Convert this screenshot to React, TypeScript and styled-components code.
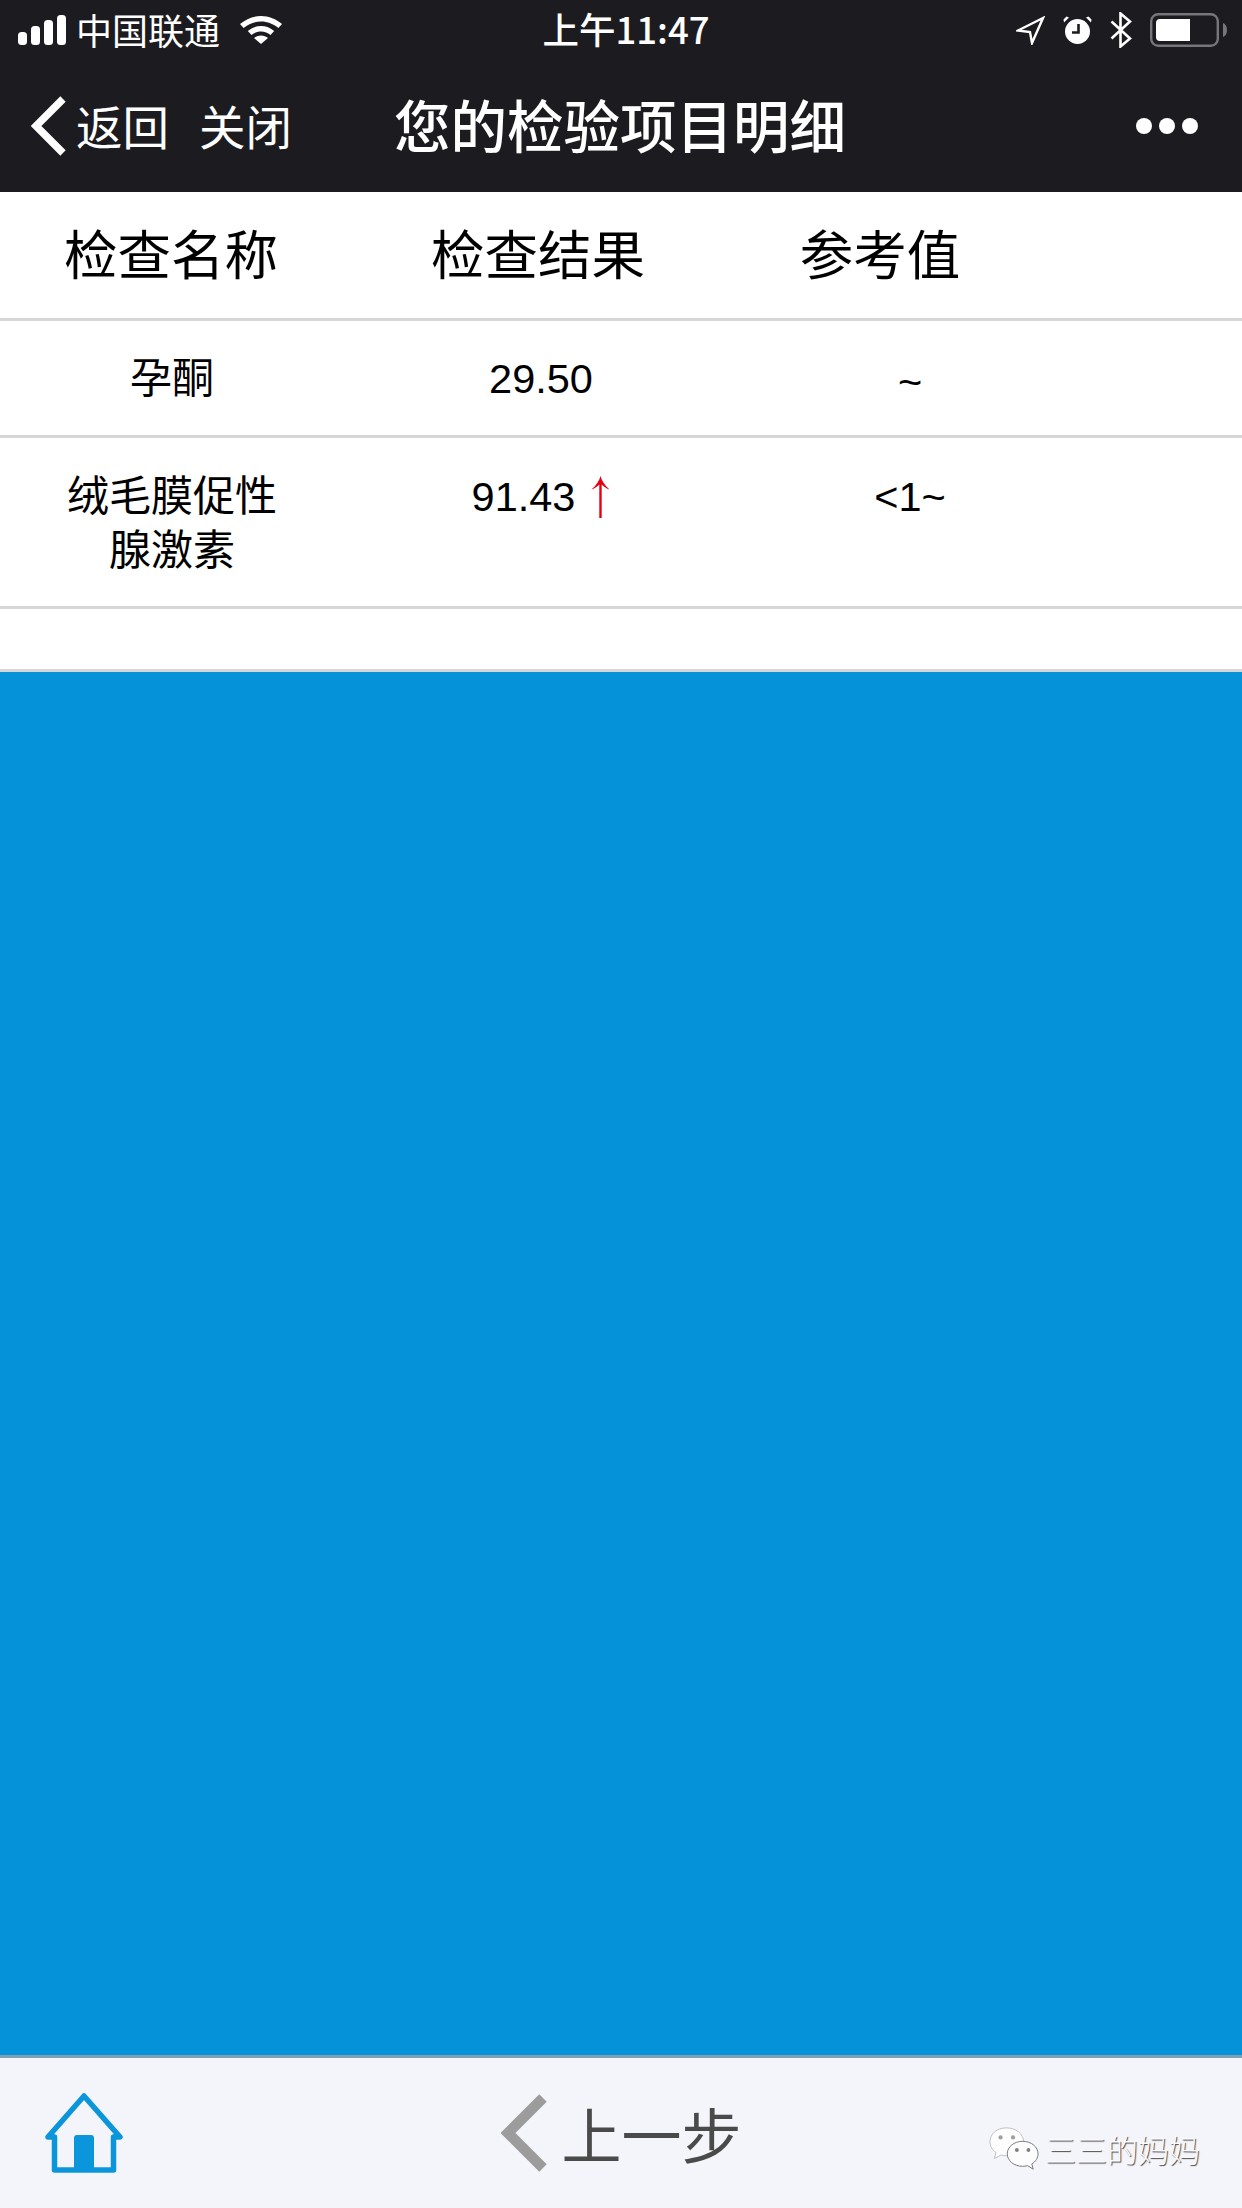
import React from "react";
import styled, { createGlobalStyle } from "styled-components";

const CJK = `"Noto Sans CJK SC", "Noto Sans", sans-serif`;
const MIXED = `"Liberation Sans", "Noto Sans CJK SC", sans-serif`;

const Global = createGlobalStyle`
  html, body { margin: 0; padding: 0; background: #0592d8; }
  * { box-sizing: border-box; }
`;

const Page = styled.div`
  width: 1242px;
  height: 2208px;
  display: flex;
  flex-direction: column;
  overflow: hidden;
  font-family: ${MIXED};
`;

const Header = styled.header`
  background: #1c1c20;
  color: #fff;
  height: 192px;
  font-family: ${CJK};
`;

const StatusBar = styled.div`
  height: 60px;
  display: grid;
  grid-template-columns: 1fr auto 1fr;
  align-items: center;
  padding: 0 15px 0 18px;
`;

const StatusLeft = styled.div`
  display: flex;
  align-items: center;
`;

const Carrier = styled.span`
  font-size: 36px;
  line-height: 58px;
  height: 60px;
  margin: 0 20px 0 10px;
  font-weight: 400;
`;

const Time = styled.span`
  font-size: 36.5px;
  line-height: 58px;
  height: 60px;
  font-weight: 500;
  margin-left: 7px;
`;

const StatusRight = styled.div`
  display: flex;
  justify-content: flex-end;
  align-items: center;
  gap: 18px;
`;

const NavBar = styled.nav`
  height: 132px;
  display: grid;
  grid-template-columns: 1fr auto 1fr;
  align-items: center;
  padding: 0 44px 0 31px;
`;

const NavLeft = styled.div`
  display: flex;
  align-items: center;
`;

const NavLink = styled.span<{ $gap: number }>`
  font-size: 46.5px;
  font-weight: 400;
  line-height: 58px;
  height: 60px;
  margin-left: ${(p) => p.$gap}px;
`;

const Title = styled.h1`
  margin: 0 0 6px 11px;
  font-size: 56.5px;
  line-height: 70px;
  font-weight: 500;
`;

const Dots = styled.div`
  display: flex;
  justify-content: flex-end;
  gap: 7px;
`;

const Dot = styled.i`
  width: 16px;
  height: 16px;
  border-radius: 50%;
  background: #fff;
`;

const Table = styled.section`
  background: #fff;
  color: #000;
`;

const Row = styled.div<{ $columns: string; $height: number; $top?: number }>`
  display: grid;
  grid-template-columns: ${(p) => p.$columns};
  height: ${(p) => p.$height}px;
  padding-top: ${(p) => p.$top ?? 0}px;
  border-bottom: 3px solid #d6d6d6;
  text-align: center;
`;

const HeadCell = styled.div`
  font-size: 53.5px;
  line-height: 120px;
  font-family: ${CJK};
  font-weight: 400;
`;

const Cell = styled.div<{ $shift?: number }>`
  font-size: 41.5px;
  line-height: 54px;
  padding-top: ${(p) => p.$shift ?? 0}px;
  font-weight: 400;
  font-family: ${MIXED};
`;

const NameCell = styled.div<{ $lift: number }>`
  font-size: 42px;
  line-height: 54px;
  margin-top: ${(p) => -p.$lift}px;
  font-weight: 400;
  font-family: ${CJK};
`;

const ResultCell = styled(Cell)`
  display: flex;
  justify-content: center;
  align-items: flex-start;
`;

const Arrow = styled.svg`
  margin: 6px 0 0 16px;
`;

const Blue = styled.main`
  flex: 1;
  background: #0592d8;
  border-bottom: 3px solid #7f9fb3;
`;

const Footer = styled.footer`
  height: 150px;
  background: #f4f5fa;
  display: grid;
  grid-template-columns: 1fr auto 1fr;
  align-items: center;
  padding: 0 42px 0 44px;
`;

const Prev = styled.div`
  display: flex;
  align-items: center;
  gap: 15px;
  margin-left: -2px;
  color: #4a4a4a;
  font-family: ${CJK};
  font-size: 60px;
  font-weight: 400;
  line-height: 80px;
`;

const Watermark = styled.div`
  justify-self: end;
  align-self: end;
  display: flex;
  align-items: center;
  gap: 6px;
  padding-bottom: 36px;
  font-family: ${CJK};
  font-size: 31px;
  line-height: 44px;
  font-weight: 300;
  color: #fbfbfd;
  text-shadow: 1px 1px 1px rgba(40, 40, 40, 0.85);
`;

const HEAD_COLUMNS = "342px 392px 292px 216px";
const BODY_COLUMNS = "344px 394px 344px 160px";

const Signal = () => (
  <svg width="48" height="30" viewBox="0 0 48 30" fill="#fff">
    <rect x="0" y="17" width="9" height="13" rx="3.5" />
    <rect x="13" y="11" width="9" height="19" rx="3.5" />
    <rect x="26" y="5" width="9" height="25" rx="3.5" />
    <rect x="39" y="0" width="9" height="30" rx="3.5" />
  </svg>
);

const Wifi = () => (
  <svg width="42" height="28" viewBox="0 0 42 28" fill="#fff">
    <path d="M21 0C13 0 6 3 0 8l3.6 4C8.6 8 14.500 5.500 21 5.500S33.400 8 38.400 12L42 8C36 3 29 0 21 0z" />
    <path d="M21 10c-5 0-9.600 1.900-13.200 5l3.700 4.100c2.600-2.200 5.900-3.500 9.500-3.500s6.900 1.300 9.500 3.500l3.700-4.100C30.600 11.900 26 10 21 10z" />
    <path d="M21 19.500c-2.700 0-5.100 1-7 2.600L21 28l7-5.900c-1.900-1.600-4.300-2.600-7-2.600z" />
  </svg>
);

const Location = () => (
  <svg width="29" height="29" viewBox="0 0 29 29" fill="none" stroke="#fff" strokeWidth="2.4" strokeLinejoin="miter">
    <path d="M27 2L2 14.500l12 1.500 2 11z" />
  </svg>
);

const Alarm = () => (
  <svg width="29" height="28" viewBox="0 0 29 28" fill="#fff">
    <circle cx="14.500" cy="15.500" r="12.500" />
    <path d="M1 6.500L6 1.500 3.500 0.500 0.500 3.500z" />
    <path d="M28 6.500L23 1.500 25.500 0.500 28.500 3.500z" />
    <path d="M15.500 8v8.500H9" fill="none" stroke="#1c1c20" strokeWidth="2.600" />
  </svg>
);

const Bluetooth = () => (
  <svg width="22" height="36" viewBox="0 0 22 36" fill="none" stroke="#fff" strokeWidth="2.600">
    <path d="M1.500 9.500L20 26.500 10.500 34.500V1.500L20 9.500 1.500 26.500" />
  </svg>
);

const Battery = () => (
  <svg width="77" height="34" viewBox="0 0 77 34">
    <rect x="1.200" y="1.200" width="66.600" height="31.600" rx="7" fill="none" stroke="#77777b" strokeWidth="2.400" />
    <path d="M6 10a4 4 0 0 1 4-4h30v22H10a4 4 0 0 1-4-4z" fill="#fff" />
    <path d="M73 10c2.500 1 4 3.500 4 7s-1.500 6-4 7z" fill="#77777b" />
  </svg>
);

const NavChevron = () => (
  <svg width="35" height="60" viewBox="0 0 35 60" fill="none" stroke="#fff" strokeWidth="7.500">
    <path d="M32 3L5 30l27 27" />
  </svg>
);

const RedArrow = () => (
  <Arrow width="19" height="42" viewBox="0 0 19 42">
    <path d="M9.500 0c1.200 4.500 4 9 9 13.500-3-1-5.300-2.400-7.800-5V42H8.300V8.500c-2.500 2.600-4.800 4-7.800 5C5.500 9 8.300 4.500 9.500 0z" fill="#e60012" />
  </Arrow>
);

const House = () => (
  <svg width="80" height="80" viewBox="0 0 80 80">
    <path
      d="M40 3L76 44H69.500V77H10.500V44H4z"
      fill="none"
      stroke="#0b96dc"
      strokeWidth="5.500"
      strokeLinejoin="round"
    />
    <path d="M30 45a3 3 0 0 1 3-3h14a3 3 0 0 1 3 3v32H30z" fill="#0b96dc" />
  </svg>
);

const PrevChevron = () => (
  <svg width="46" height="78" viewBox="0 0 46 78" fill="none" stroke="#9c9c9c" strokeWidth="10.500">
    <path d="M42 4L7 39l35 35" />
  </svg>
);

const Bubbles = () => (
  <svg width="50" height="46" viewBox="0 0 52 46">
    <path d="M18 1C8 1 1 7.500 1 15.500c0 4.600 2.400 8.600 6.300 11.300L5.500 33l7-3.700c2 .5 3.700.8 5.500.8 10 0 18-6.500 18-14.600C36 7.500 28 1 18 1z" fill="#fdfdfe" stroke="#b0b0b4" strokeWidth="0.800" />
    <circle cx="12" cy="11" r="2.200" fill="#a0a0a4" />
    <circle cx="25" cy="11" r="2.200" fill="#a0a0a4" />
    <path d="M35 15c-9 0-16 5.800-16 13s7 13 16 13c1.800 0 3.400-.2 5-.7l6 3.700-1.500-5.500C48.400 36.200 51 32.400 51 28c0-7.200-7-13-16-13z" fill="#fdfdfe" stroke="#77777b" strokeWidth="1" />
    <circle cx="29" cy="24" r="2" fill="#808084" />
    <circle cx="41" cy="24" r="2" fill="#808084" />
  </svg>
);

export default function App() {
  return (
    <Page>
      <Global />
      <Header>
        <StatusBar>
          <StatusLeft>
            <Signal />
            <Carrier>中国联通</Carrier>
            <Wifi />
          </StatusLeft>
          <Time>上午11:47</Time>
          <StatusRight>
            <Location />
            <Alarm />
            <Bluetooth />
            <Battery />
          </StatusRight>
        </StatusBar>
        <NavBar>
          <NavLeft>
            <NavChevron />
            <NavLink $gap={10}>返回</NavLink>
            <NavLink $gap={30}>关闭</NavLink>
          </NavLeft>
          <Title>您的检验项目明细</Title>
          <Dots>
            <Dot />
            <Dot />
            <Dot />
          </Dots>
        </NavBar>
      </Header>
      <Table>
        <Row $columns={HEAD_COLUMNS} $height={129}>
          <HeadCell>检查名称</HeadCell>
          <HeadCell>检查结果</HeadCell>
          <HeadCell>参考值</HeadCell>
        </Row>
        <Row $columns={BODY_COLUMNS} $height={117} $top={31}>
          <NameCell $lift={4}>孕酮</NameCell>
          <Cell>29.50</Cell>
          <Cell $shift={3}>~</Cell>
        </Row>
        <Row $columns={BODY_COLUMNS} $height={171} $top={32}>
          <NameCell $lift={4}>
            绒毛膜促性
            <br />
            腺激素
          </NameCell>
          <ResultCell>
            91.43
            <RedArrow />
          </ResultCell>
          <Cell>&lt;1~</Cell>
        </Row>
        <Row $columns={BODY_COLUMNS} $height={63} />
      </Table>
      <Blue />
      <Footer>
        <House />
        <Prev>
          <PrevChevron />
          上一步
        </Prev>
        <Watermark>
          <Bubbles />
          三三的妈妈
        </Watermark>
      </Footer>
    </Page>
  );
}
